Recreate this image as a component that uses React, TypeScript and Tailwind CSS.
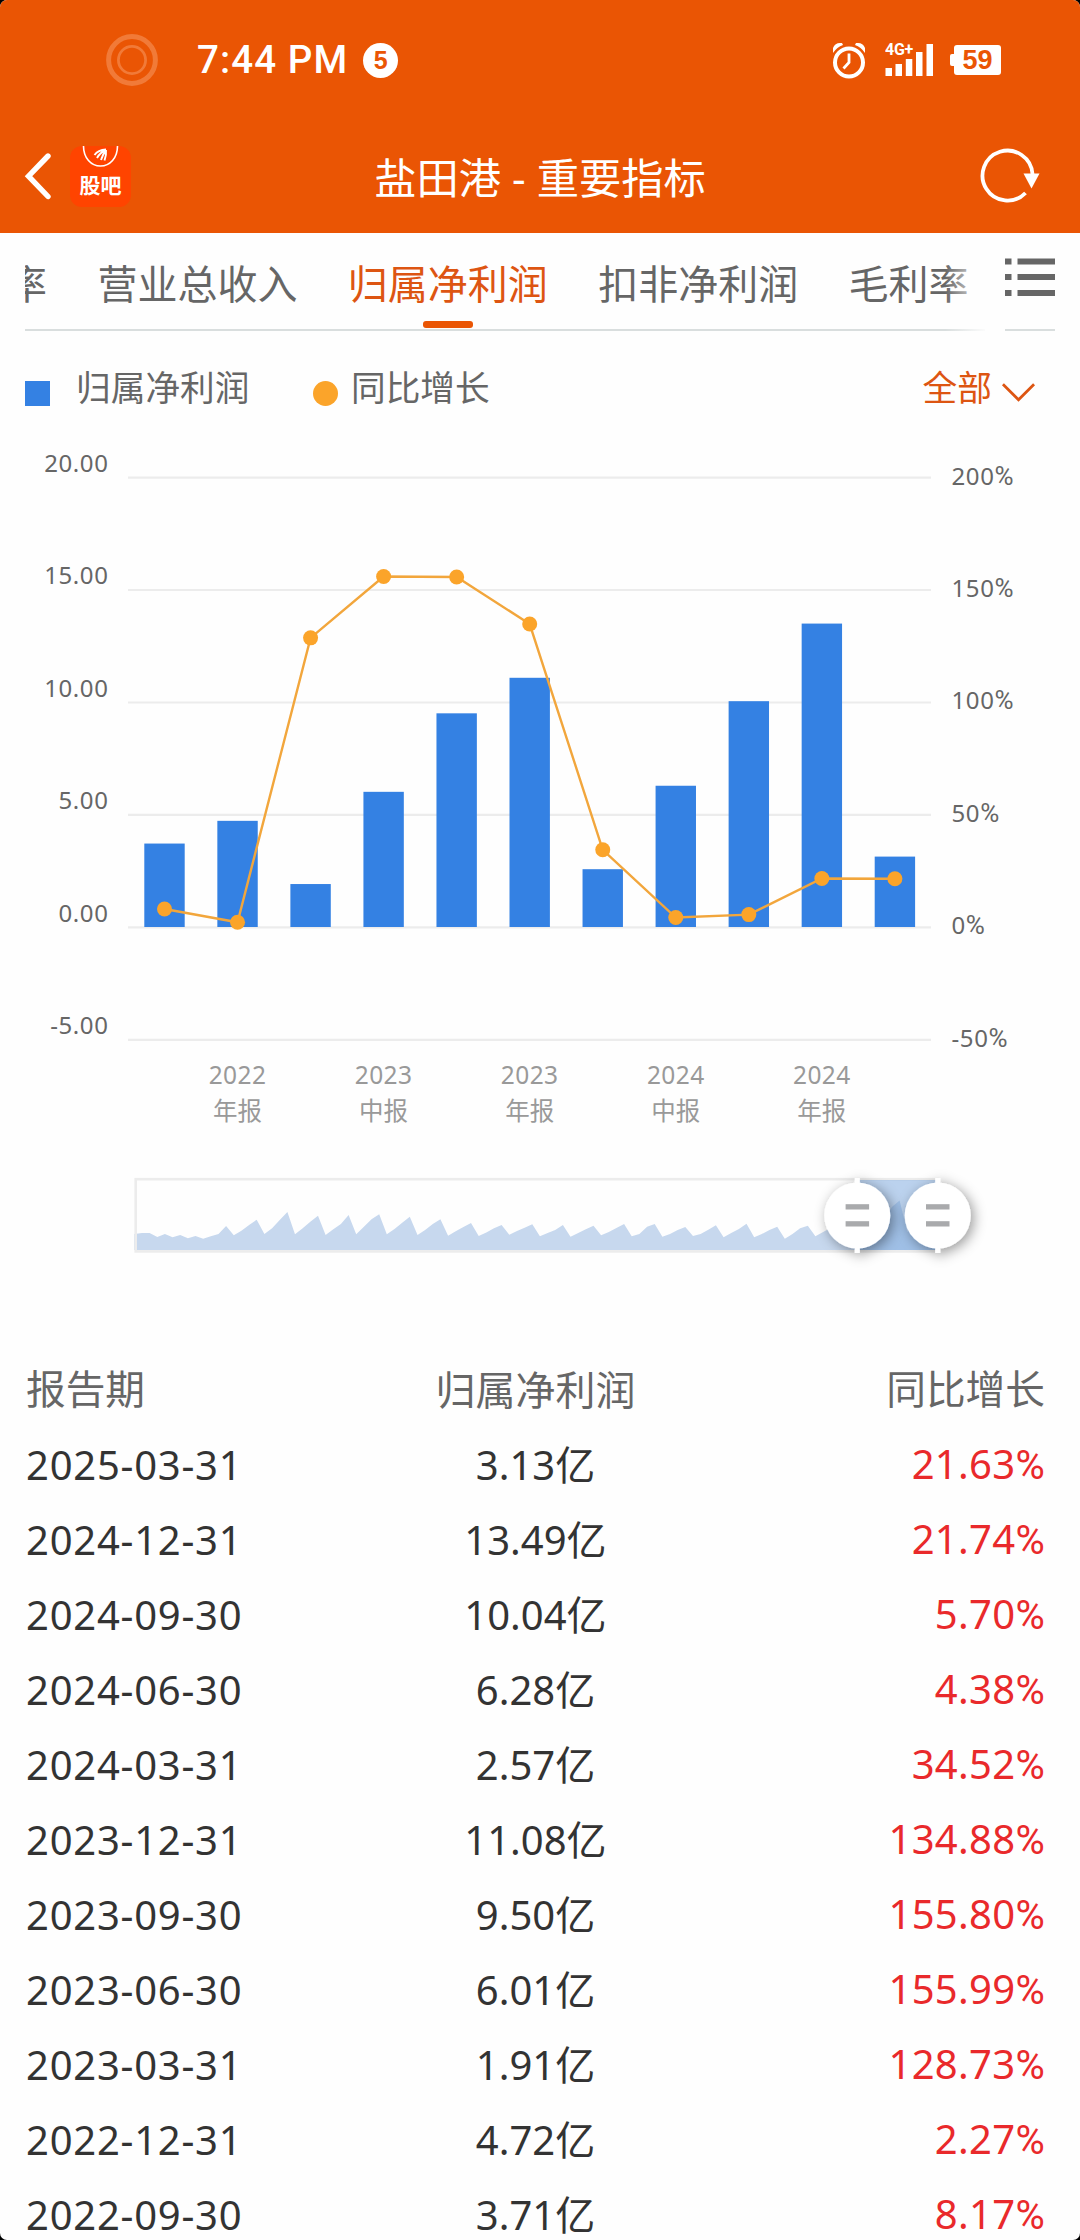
import { Fragment } from "react";
import type { ReactElement } from "react";

type Report = {
  date: string;
  profit: number;
  growth: number;
};

const REPORTS: Report[] = [
  { date: "2025-03-31", profit: 3.13, growth: 21.63 },
  { date: "2024-12-31", profit: 13.49, growth: 21.74 },
  { date: "2024-09-30", profit: 10.04, growth: 5.7 },
  { date: "2024-06-30", profit: 6.28, growth: 4.38 },
  { date: "2024-03-31", profit: 2.57, growth: 34.52 },
  { date: "2023-12-31", profit: 11.08, growth: 134.88 },
  { date: "2023-09-30", profit: 9.5, growth: 155.8 },
  { date: "2023-06-30", profit: 6.01, growth: 155.99 },
  { date: "2023-03-31", profit: 1.91, growth: 128.73 },
  { date: "2022-12-31", profit: 4.72, growth: 2.27 },
  { date: "2022-09-30", profit: 3.71, growth: 8.17 },
];

// full history shown in the range slider, one height per quarter
const HISTORY = [
  16, 17, 17, 13, 16, 12.7, 15, 11.7, 14, 11.3, 13.7, 16, 24, 14.7, 19.3, 25, 30.3, 16, 21.7, 30, 38,
  15.7, 21.7, 28.3, 34.3, 15, 20.7, 26, 35, 15.7, 23.3, 30.7, 35.7, 15.7, 21, 27.3, 33.3, 15, 20, 26,
  30.7, 14.3, 18.7, 23, 27, 14, 17.5, 21.7, 25, 15.3, 19, 22.3, 25.7, 13.7, 17, 20, 25, 13.3, 17, 20.7,
  24.3, 14.7, 18, 22, 26, 13.7, 16, 23.3, 26, 13.3, 16, 20, 23, 14, 16, 20.3, 24.7, 12.7, 17, 21, 26.3,
  12.7, 16, 20, 23.3, 11.3, 16, 21.7, 24.3, 13.7, 18, 22, 26, 12, 20, 28, 33, 14, 30, 43, 49.5, 18, 30,
  40, 50, 20,
];

const TABS = ["营业总收入", "归属净利润", "扣非净利润", "毛利率"];

export default function App(): ReactElement {
  return (
    <div className="h-[2240px] w-[1080px] bg-black">
      <div className="flex h-full w-full flex-col overflow-hidden rounded-[7px] bg-[#fefefe] font-['Noto_Sans','Noto_Sans_CJK_SC',sans-serif]">
        <header className="flex h-[233px] shrink-0 flex-col bg-[#ea5504] text-white">
          <StatusBar />
          <NavBar />
        </header>
        <TabBar />
        <Legend />
        <ProfitChart />
        <RangeSlider />
        <ReportTable />
      </div>
    </div>
  );
}

function StatusBar(): ReactElement {
  return (
    <div className="flex h-[120px] items-center pl-[106px] pr-[79px]">
      <svg width="52" height="52" viewBox="0 0 52 52" fill="none" stroke="#f17a38">
        <circle cx="26" cy="26" r="23.4" strokeWidth="5" />
        <circle cx="26" cy="26" r="13.6" strokeWidth="2.8" />
      </svg>
      <span className="ml-[39px] whitespace-nowrap font-['Roboto',sans-serif] text-[38.5px] font-medium leading-none tracking-[1.1px]">
        7:44 PM
      </span>
      <span className="ml-[15px] flex size-[35px] items-center justify-center rounded-full bg-white font-['Liberation_Sans',sans-serif] text-[25px] font-bold leading-none text-[#ea5504]">
        5
      </span>
      <div className="ml-auto flex items-center">
        <svg width="34" height="38" viewBox="0 0 34 38" fill="none" stroke="#fff">
          <path d="M0 12V7Q2 2 7 2H9L10 4Q4 6 0 12ZM32 12V7Q30 2 25 2H23L22 4Q28 6 32 12Z" fill="#fff" stroke="none" />
          <circle cx="16" cy="21.5" r="14" strokeWidth="4" />
          <path d="M16 12.500V21.500L10.500 27.500" strokeWidth="2.800" />
        </svg>
        <svg className="ml-[18px]" width="50" height="38" viewBox="0 0 50 38" fill="#fff">
          <text x="0" y="14" fontFamily="Roboto, sans-serif" fontSize="16" fontWeight="700" letterSpacing="-0.300">
            4G+
          </text>
          <rect x="0.500" y="27" width="6.500" height="8" />
          <rect x="10.500" y="23" width="6.500" height="12" />
          <rect x="20.800" y="18" width="6.500" height="17" />
          <rect x="31" y="11" width="6.500" height="24" />
          <rect x="41.500" y="3" width="6.500" height="32" />
        </svg>
        <div className="ml-[15px] flex items-center">
          <span className="h-3 w-1 rounded-l-[2px] bg-white" />
          <span className="flex h-[30px] w-[47px] items-center justify-center rounded-[3px] bg-white font-['Liberation_Sans',sans-serif] text-[27px] font-bold leading-none text-[#ea5504]">
            59
          </span>
        </div>
      </div>
    </div>
  );
}

function NavBar(): ReactElement {
  return (
    <div className="flex h-[113px] items-center pl-6 pr-[38px]">
      <div className="flex w-[200px] items-center">
        <svg width="28" height="48" viewBox="0 0 28 48" fill="none" stroke="#fff" strokeWidth="5.4">
          <path d="M24 3L4.500 23.200L24 43.500" strokeLinecap="round" />
        </svg>
        <div className="ml-[18px] flex h-[61px] w-[61px] flex-col items-center overflow-hidden rounded-[12px] bg-[#ff4400]">
          <svg width="61" height="24" viewBox="0 0 61 24" fill="none" stroke="#fff">
            <path d="M13.500 0C13.500 12 21 20 30.500 20S47.500 12 47.500 0" strokeWidth="1.600" />
            <path
              d="M24.500 9Q28 4 36 3.500M27 12Q30 6.500 36 4M31 14Q32.500 8.500 36 4.500M34.500 14.500Q36.500 9 36 4"
              strokeWidth="1.900"
            />
          </svg>
          <span className="text-[21px] font-bold leading-[30px]">股吧</span>
        </div>
      </div>
      <h1 className="mt-1 w-[632px] whitespace-nowrap text-center text-[42.3px] leading-none">盐田港 - 重要指标</h1>
      <div className="flex flex-1 justify-end">
        <svg className="-mt-px" width="62" height="60" viewBox="0 0 62 60" fill="none">
          <path d="M45.500 47A25 25 0 1 1 52.500 28" stroke="#fff" strokeWidth="3.800" />
          <path d="M43.500 27.500H59.500L51.500 42.500Z" fill="#fff" />
        </svg>
      </div>
    </div>
  );
}

function TabBar(): ReactElement {
  return (
    <nav className="flex h-[98px] shrink-0 px-[25px] text-[40px] text-[#666]">
      <div className="relative flex w-[960px] border-b-2 border-[#d9dede]">
        <div className="flex w-[22px] justify-end overflow-hidden whitespace-nowrap leading-[101px]">率</div>
        {TABS.map((tab) => (
          <div
            key={tab}
            className={
              tab === "归属净利润"
                ? "ml-[50.4px] flex h-full flex-col items-center whitespace-nowrap text-[#dd5512]"
                : "ml-[50.4px] flex h-full flex-col items-center whitespace-nowrap"
            }
          >
            <span className="h-[88px] leading-[101px]">{tab}</span>
            {tab === "归属净利润" ? <span className="h-[7px] w-[50px] rounded-[3px] bg-[#ea5504]" /> : null}
          </div>
        ))}
        <span className="absolute -bottom-0.5 -right-1 h-[98px] w-[44px] bg-gradient-to-r from-[#fefefe00] to-[#fefefe]" />
      </div>
      <div className="ml-5 flex w-[50px] flex-col border-b-2 border-[#d9dede] pt-[25px]">
        <svg width="50" height="40" viewBox="0 0 50 40" fill="#666">
          <path d="M0 0.500H6.500V6.500H0ZM12.500 0.500H50V6.500H12.500ZM0 16H6.500V22H0ZM12.500 16H50V22H12.500ZM0 32H6.500V38H0ZM12.500 32H50V38H12.500Z" />
        </svg>
      </div>
    </nav>
  );
}

function Legend(): ReactElement {
  return (
    <div className="flex h-[115px] shrink-0 items-center pl-[25px] pr-11 text-[34.7px] leading-none text-[#666]">
      <span className="mt-[10px] size-[25px] bg-[#3481e3]" />
      <span className="ml-[26px]">归属净利润</span>
      <span className="ml-[64px] mt-[10px] size-[25px] rounded-full bg-[#fba42a]" />
      <span className="ml-[12.5px]">同比增长</span>
      <span className="ml-auto text-[#dd5512]">全部</span>
      <svg className="ml-[9px] mt-1.5" width="35" height="20" viewBox="0 0 36 20" fill="none">
        <path d="M2 2L18 18L34 2" stroke="#dd5512" strokeWidth="2.800" />
      </svg>
    </div>
  );
}

const ZERO_Y = 481.4;
const STEP_Y = 112.46;

function ProfitChart(): ReactElement {
  const points = [...REPORTS].reverse().map((report, index) => ({
    ...report,
    x: 164.5 + index * 73.04,
    barHeight: (report.profit / 5) * STEP_Y,
    y: ZERO_Y - (report.growth / 50) * STEP_Y,
  }));

  return (
    <svg className="shrink-0" width="1080" height="704" viewBox="0 0 1080 704">
      {[4, 3, 2, 1, 0, -1].map((tick) => {
        const y = ZERO_Y - tick * STEP_Y;
        return (
          <g key={tick} fill="#666" fontSize="24" letterSpacing="0.6">
            <line x1="128" x2="931" y1={y} y2={y} stroke="#ececec" strokeWidth="2.2" />
            <text x="108.5" y={y - 5.6} textAnchor="end">
              {(tick * 5).toFixed(2)}
            </text>
            <text x="951.5" y={y + 7}>
              {tick * 50}
              <tspan fontFamily="Roboto" fontSize="26">%</tspan>
            </text>
          </g>
        );
      })}
      {points.map((point) => (
        <rect
          key={point.date}
          x={point.x - 20.2}
          y={ZERO_Y - 0.4 - point.barHeight}
          width="40.4"
          height={point.barHeight}
          fill="#3481e3"
        />
      ))}
      <polyline
        points={points.map((point) => `${point.x},${point.y}`).join(" ")}
        fill="none"
        stroke="#f2a63c"
        strokeWidth="2.4"
      />
      {points.map((point) => (
        <circle key={point.date} cx={point.x} cy={point.y} r="7.5" fill="#fba42a" />
      ))}
      {points.map((point, index) =>
        index % 2 === 1 && index < 10 ? (
          <g key={point.date} fill="#999" fontSize="24.5" textAnchor="middle">
            <text x={point.x} y="638" letterSpacing="0.4">
              {point.date.slice(0, 4)}
            </text>
            <text x={point.x} y="673.5">
              {point.date.endsWith("12-31") ? "年报" : "中报"}
            </text>
          </g>
        ) : null,
      )}
    </svg>
  );
}

function RangeSlider(): ReactElement {
  const area = HISTORY.map((height, index) => `${(134.3 + index * 7.653).toFixed(1)},${100 - height}`).join(" ");

  return (
    <svg className="shrink-0" width="1080" height="203" viewBox="0 0 1080 203">
      <defs>
        <filter id="handle-shadow" x="-50%" y="-50%" width="200%" height="200%">
          <feDropShadow dx="3" dy="3" stdDeviation="6.5" floodColor="#000" floodOpacity="0.4" />
        </filter>
      </defs>
      <polygon points={`134.3,100 ${area} 937.7,100`} fill="#c7d8ee" />
      <rect x="135.7" y="29.200" width="802" height="72.200" fill="none" stroke="#ececec" strokeWidth="2.600" />
      <rect x="857.3" y="30" width="80.400" height="70" fill="#78a5dd" fillOpacity="0.500" />
      {[857.3, 937.7].map((x) => (
        <Fragment key={x}>
          <g filter="url(#handle-shadow)">
            <circle cx={x} cy="65.500" r="33" fill="#fff" />
            <rect x={x - 2.5} y="28" width="5" height="75" fill="#fff" />
          </g>
          <rect x={x - 11.7} y="54.200" width="23.500" height="5.300" fill="#a9aaac" />
          <rect x={x - 11.7} y="71.200" width="23.500" height="5.300" fill="#a9aaac" />
        </Fragment>
      ))}
    </svg>
  );
}

function ReportTable(): ReactElement {
  return (
    <section className="-mt-[0.5px] h-[888px] pl-[26px] pr-[35px] text-[40px] text-[#333]">
      <div className="grid h-[75px] grid-cols-3 items-center leading-none text-[#666]">
        <span className="text-[39.7px]">报告期</span>
        <span className="text-center">归属净利润</span>
        <span className="text-right text-[39.7px]">同比增长</span>
      </div>
      {REPORTS.map((report) => (
        <div key={report.date} className="grid h-[75px] grid-cols-3 items-center leading-none">
          <span className="tracking-[0.75px]">{report.date}</span>
          <span className="text-center">{report.profit.toFixed(2)}亿</span>
          <span className="text-right tracking-[0.3px] text-[#e9292b]">
            {report.growth.toFixed(2)}
            <span className="font-['Roboto',sans-serif]">%</span>
          </span>
        </div>
      ))}
    </section>
  );
}
